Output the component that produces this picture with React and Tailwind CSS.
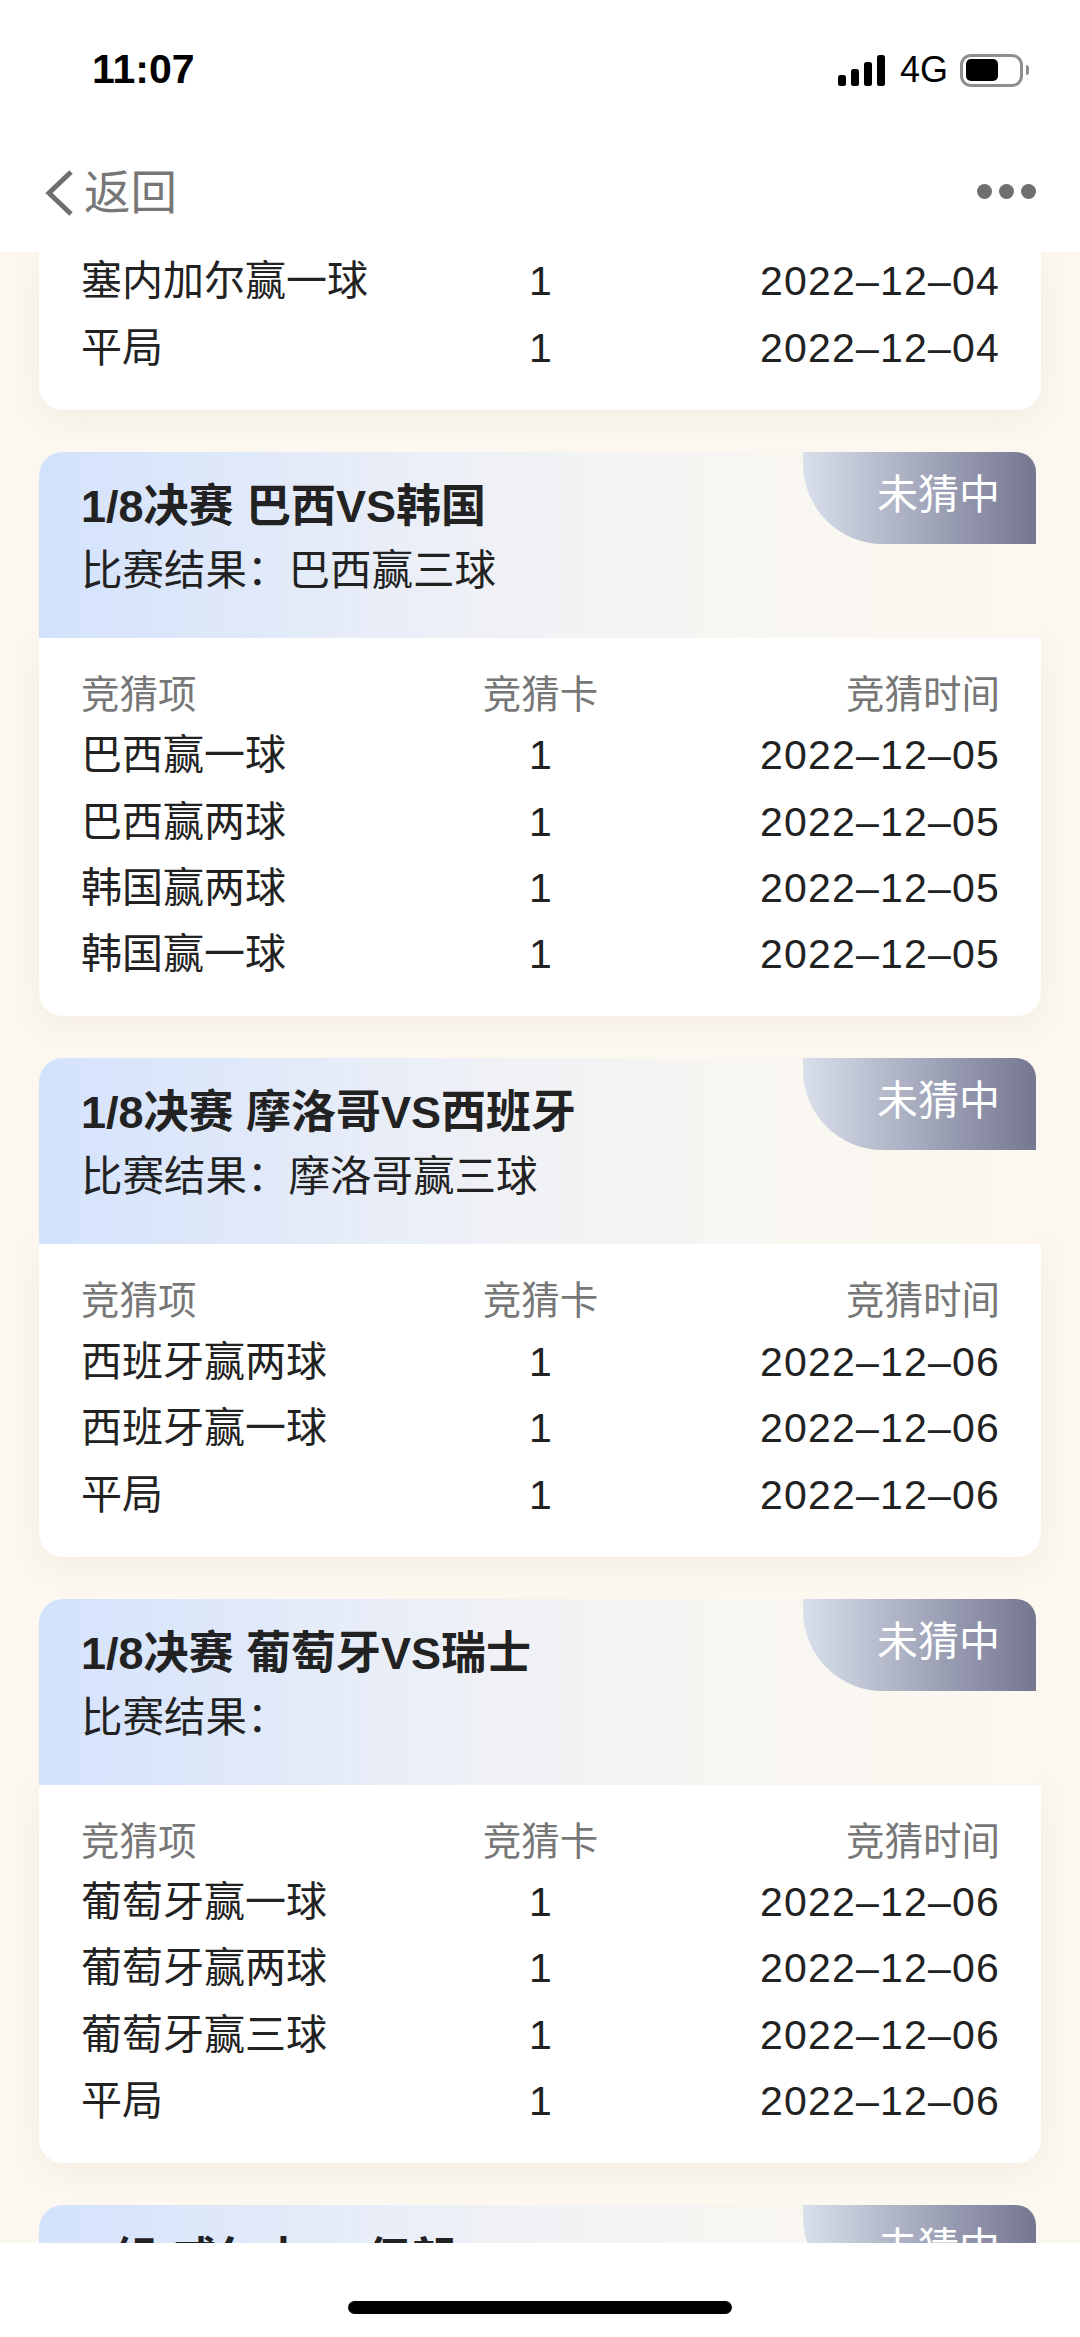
const FONT = "font-['Liberation_Sans','Noto_Sans_CJK_SC',sans-serif]";

function Row({ a, b, c }) {
  return (
    <div className="grid h-[66.4px] grid-cols-3 items-center text-[41px] text-[#222222]">
      <div className="whitespace-nowrap text-left">{a}</div>
      <div className="whitespace-nowrap text-center">{b}</div>
      <div className="whitespace-nowrap text-right tracking-[1.2px]">{c}</div>
    </div>
  );
}

function HeadRow() {
  return (
    <div className="grid h-[57px] grid-cols-3 items-center text-[38.5px] text-[#777777]">
      <div className="whitespace-nowrap text-left">竞猜项</div>
      <div className="whitespace-nowrap text-center">竞猜卡</div>
      <div className="whitespace-nowrap text-right">竞猜时间</div>
    </div>
  );
}

function Card({ title, result, rows, date }) {
  return (
    <section>
      <header className="relative mr-[5px] h-[186px] rounded-t-[24px] bg-[linear-gradient(90deg,#d3e2fc_0%,#eff1f6_45%,#f8f6f2_70%,#fcf8f0_100%)] pl-[42px] pt-[30px]">
        <div className="whitespace-nowrap text-[45px] font-bold leading-[50px] text-[#222222]">{title}</div>
        <div className="mt-[14px] whitespace-nowrap text-[41.5px] leading-[50px] text-[#222222]">比赛结果：{result}</div>
        <div className="absolute right-0 top-0 flex h-[92px] w-[233px] items-start justify-end rounded-bl-[80px] rounded-tr-[20px] bg-gradient-to-r from-[#d9e0eb] to-[#757791] pr-[36px] pt-[18px] text-[41px] leading-[50px] text-white">
          未猜中
        </div>
      </header>
      <div className="rounded-b-[24px] bg-white pb-[28px] pl-[42px] pr-[41px] pt-[28px] shadow-[0_8px_30px_rgba(180,160,120,0.12)]">
        <HeadRow />
        {rows.map((r) => (
          <Row key={r} a={r} b="1" c={date} />
        ))}
      </div>
    </section>
  );
}

function StatusBar() {
  return (
    <div className="flex h-[136px] items-start justify-between pl-[92px] pr-[51px] pt-[46px]">
      <div className="text-[41px] font-bold leading-[46px] text-black">11:07</div>
      <div className="flex items-center pt-[6px]">
        <svg width="47" height="31" viewBox="0 0 47 31" fill="#000">
          <rect x="0" y="20" width="8" height="11" rx="2.5" />
          <rect x="13" y="14" width="8" height="17" rx="2.5" />
          <rect x="26" y="7" width="8" height="24" rx="2.5" />
          <rect x="39" y="0" width="8" height="31" rx="2.5" />
        </svg>
        <div className="ml-[15px] text-[36px] leading-[36px] text-black">4G</div>
        <div className="ml-[12px] flex h-[33px] w-[63px] items-center rounded-[11px] border-[3px] border-[#8e8e8e] pl-[3px]">
          <div className="h-[22px] w-[32px] rounded-[5px] bg-black" />
        </div>
        <div className="ml-[3px] h-[10px] w-[3px] rounded-r-[3px] bg-[#8e8e8e]" />
      </div>
    </div>
  );
}

function NavBar() {
  return (
    <div className="flex h-[116px] items-start justify-between pl-[45px] pr-[44px] pt-[34px]">
      <div className="flex items-center text-[#777777]">
        <svg width="28" height="46" viewBox="0 0 28 46" fill="none" stroke="#6f6f6f" strokeWidth="5">
          <path d="M26 2 L4 23 L26 44" />
        </svg>
        <span className="ml-[11px] text-[46.5px] leading-[46px]">返回</span>
      </div>
      <div className="mt-[14px] flex gap-[7px]">
        <div className="h-[15px] w-[15px] rounded-full bg-[#6f6f6f]" />
        <div className="h-[15px] w-[15px] rounded-full bg-[#6f6f6f]" />
        <div className="h-[15px] w-[15px] rounded-full bg-[#6f6f6f]" />
      </div>
    </div>
  );
}

export default function App() {
  return (
    <div className={`flex h-[2337px] w-[1080px] flex-col overflow-hidden bg-white ${FONT}`}>
      <div className="relative z-10 h-[252px] shrink-0 bg-white">
        <StatusBar />
        <NavBar />
      </div>
      <main className="min-h-0 flex-1 overflow-hidden bg-[#fcf8f0]">
        <div className="-mt-[3px] flex flex-col gap-[42px] px-[39px]">
          <section className="rounded-b-[24px] bg-white pb-[28px] pl-[42px] pr-[41px] shadow-[0_8px_30px_rgba(180,160,120,0.12)]">
            <Row a="塞内加尔赢一球" b="1" c="2022–12–04" />
            <Row a="平局" b="1" c="2022–12–04" />
          </section>
          <Card title="1/8决赛 巴西VS韩国" result="巴西赢三球" date="2022–12–05" rows={["巴西赢一球", "巴西赢两球", "韩国赢两球", "韩国赢一球"]} />
          <Card title="1/8决赛 摩洛哥VS西班牙" result="摩洛哥赢三球" date="2022–12–06" rows={["西班牙赢两球", "西班牙赢一球", "平局"]} />
          <Card title="1/8决赛 葡萄牙VS瑞士" result="" date="2022–12–06" rows={["葡萄牙赢一球", "葡萄牙赢两球", "葡萄牙赢三球", "平局"]} />
          <Card title="B组 威尔士VS伊朗" result="" date="2022–11–25" rows={["平局"]} />
        </div>
      </main>
      <footer className="flex h-[94px] shrink-0 justify-center bg-white pt-[58px]">
        <div className="h-[13px] w-[384px] rounded-full bg-black" />
      </footer>
    </div>
  );
}
